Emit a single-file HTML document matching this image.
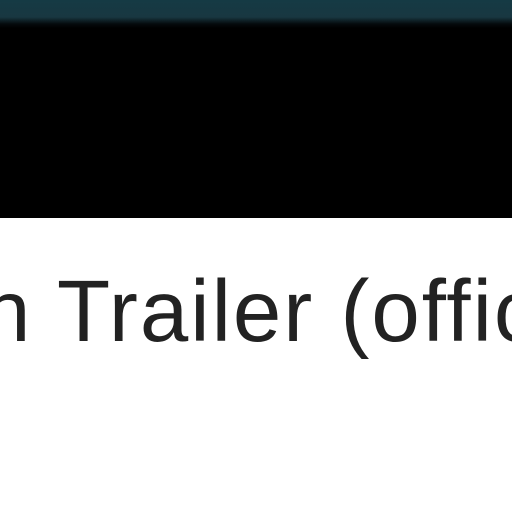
<!DOCTYPE html>
<html><head><style>
html,body{margin:0;padding:0;width:512px;height:512px;overflow:hidden;background:#fff}
.wrap{position:absolute;left:0;top:0;width:512px;height:512px;overflow:hidden}
.top{position:absolute;left:0;top:0;width:512px;height:28px;background:linear-gradient(#153a44 0,#183741 17px,#050a0c 24px,#000 28px)}
.blk{position:absolute;left:0;top:28px;width:512px;height:190px;background:#000}
.t{position:absolute;left:-18px;top:262px;font-family:"Liberation Sans",sans-serif;font-size:87px;color:#222;white-space:nowrap;line-height:100px;letter-spacing:2px}
</style></head><body>
<div class="wrap">
<div class="top"></div><div class="blk"></div>
<div class="t">n Trailer (offic</div>
</div>
</body></html>
